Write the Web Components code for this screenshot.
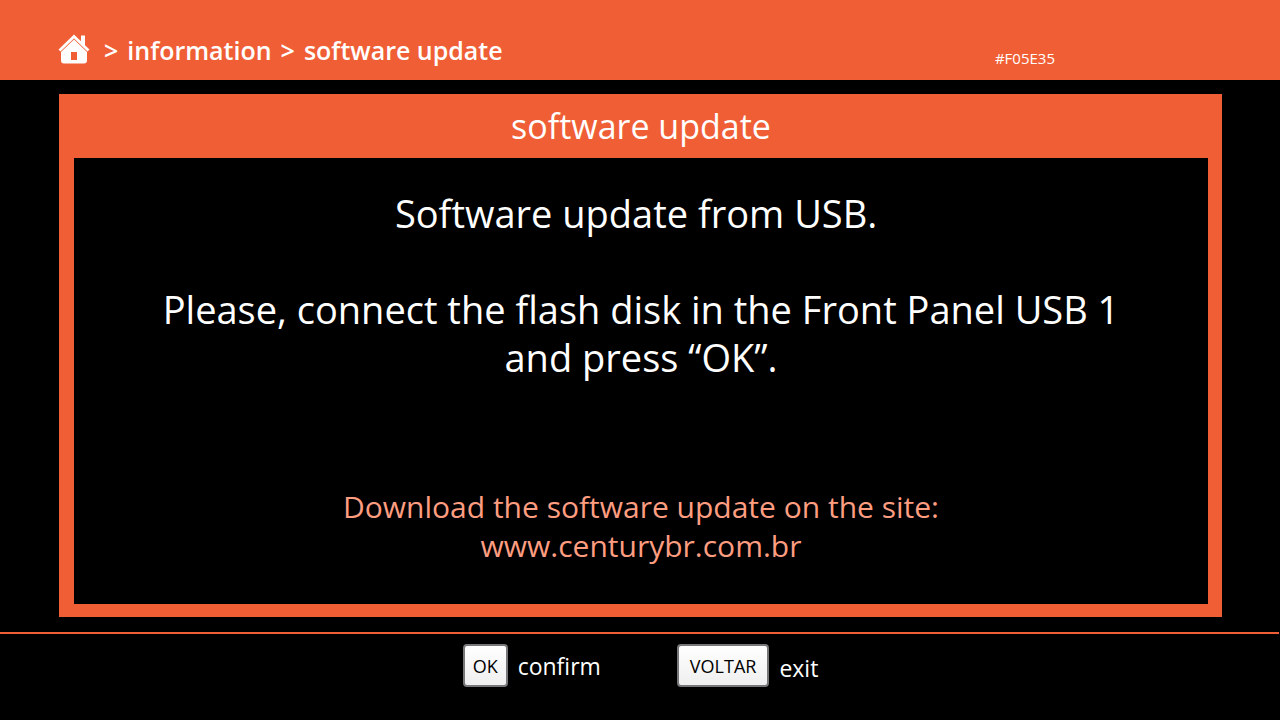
<!DOCTYPE html>
<html lang="en">
<head>
<meta charset="utf-8">
<title>Software update</title>
<style>
html, body { margin: 0; height: 100%; background: #000; }
body { font-family: "Open Sans", "Noto Sans", sans-serif; color: #fff; --accent: #f05e35; }
</style>
</head>
<body>
<update-screen></update-screen>
<script>
const define = (name, html) => {
  const template = document.createElement('template');
  template.innerHTML = html;
  customElements.define(name, class extends HTMLElement {
    constructor() {
      super();
      this.attachShadow({ mode: 'open' }).append(template.content.cloneNode(true));
    }
  });
};

define('home-icon', `
<style>:host { display: block; width: 32px; height: 32px; } svg { display: block; width: 100%; height: 100%; }</style>
<svg viewBox="0 0 32 32" aria-hidden="true">
  <path d="M23 10V2.500H27V14.500Z" fill="#fff"/>
  <path d="M1.500 17.500 16 3.500 30.500 17.500" fill="none" stroke="#fff" stroke-width="2.800"/>
  <path fill="#fff" fill-rule="evenodd" d="M16 6.500 29 19V27.500Q29 30.500 26 30.500H6Q3 30.500 3 27.500V19ZM13 19V27H19V19Z"/>
</svg>`);

define('top-bar', `
<style>
:host { display: block; background: var(--accent); }
header { display: flex; align-items: center; justify-content: space-between; height: 80px; box-sizing: border-box; padding: 20px 225px 0 58px; }
nav { display: flex; align-items: center; gap: 9px; font-size: 25px; line-height: 34px; font-weight: 600; white-space: nowrap; }
a { color: inherit; text-decoration: none; }
.home { margin: 0 5px 2px 0; }
small { font-size: 15px; line-height: 20px; margin-top: 16px; }
</style>
<header>
  <nav aria-label="Breadcrumb">
    <a class="home" href="#home" aria-label="Home"><home-icon></home-icon></a>
    <span>&gt;</span><a href="#information">information</a>
    <span>&gt;</span><a href="#update">software update</a>
  </nav>
  <small><slot></slot></small>
</header>`);

define('update-panel', `
<style>
:host { display: flex; flex-direction: column; margin: 14px 58px 15px 59px; padding: 0 14px 13px 15px; background: var(--accent); }
h1 { margin: 0; font-size: 34px; line-height: 64px; font-weight: 400; text-align: center; }
main { flex: 1; background: #000; }
</style>
<h1><slot name="title"></slot></h1>
<main><slot></slot></main>`);

define('update-message', `
<style>
:host { display: block; text-align: center; padding: 31px 16px; }
p { margin: 0 0 48px; font-size: 38px; line-height: 48px; }
.site { margin: 106px 0 0; font-size: 30px; line-height: 39px; color: #fe9d80; }
a { color: inherit; text-decoration: none; }
</style>
<p>Software update from USB.&nbsp;</p>
<p>Please, connect the flash disk in the Front Panel USB 1<br>and press “OK”.</p>
<p class="site">Download the software update on the site:<br><a href="http://www.centurybr.com.br">www.centurybr.com.br</a></p>`);

define('key-hint', `
<style>
:host { display: flex; align-items: center; gap: 10px; }
button { box-sizing: border-box; height: 43px; padding: 0 var(--key-pad, 8px); border: 2px solid #77777a; border-radius: 4px; background: linear-gradient(#fff, #efeff0); color: #000; font: 18px/24px "Open Sans", sans-serif; }
label { font-size: 23px; line-height: 32px; padding-top: var(--label-drop, 0); }
</style>
<button id="key" type="button"><slot name="key"></slot></button>
<label for="key"><slot></slot></label>`);

define('key-bar', `
<style>
:host { display: block; margin-right: 1px; border-top: 2px solid var(--accent); }
footer { display: flex; justify-content: center; gap: 76px; height: 86px; box-sizing: border-box; padding: 10px 0 0 2px; align-items: flex-start; }
.exit { --key-pad: 11px; --label-drop: 4px; }
</style>
<footer>
  <key-hint><span slot="key">OK</span>confirm</key-hint>
  <key-hint class="exit"><span slot="key">VOLTAR</span>exit</key-hint>
</footer>`);

define('update-screen', `
<style>
:host { display: flex; flex-direction: column; min-height: 100vh; }
update-panel { flex: 1; }
</style>
<top-bar>#F05E35</top-bar>
<update-panel><span slot="title">software update</span><update-message></update-message></update-panel>
<key-bar></key-bar>`);
</script>
</body>
</html>
